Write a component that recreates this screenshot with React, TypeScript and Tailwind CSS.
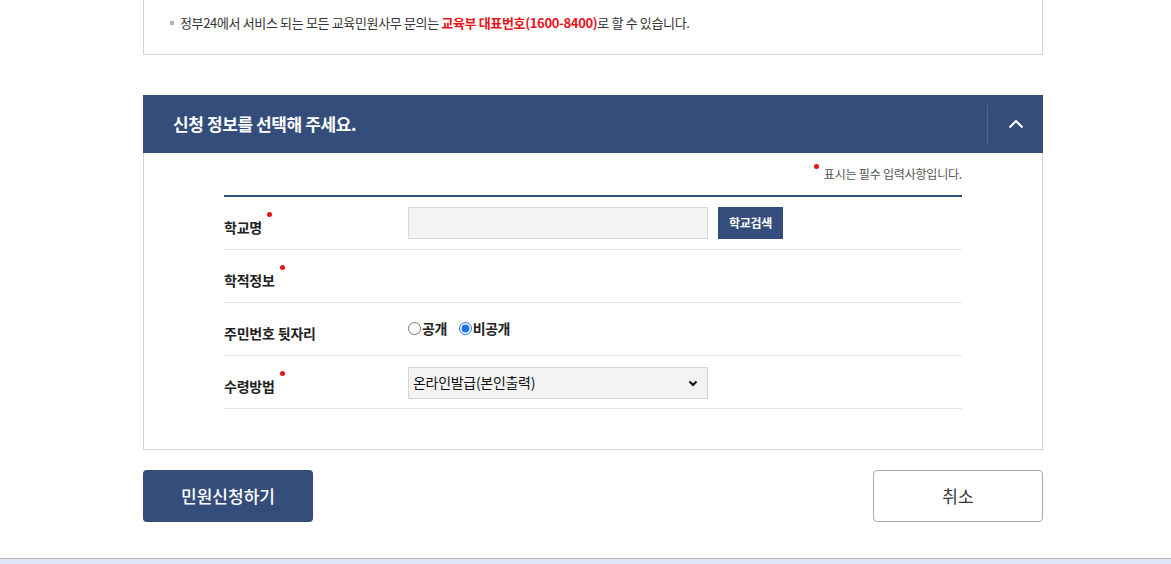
import React from "react";

const F = { fontFamily: '"Noto Sans CJK KR", "Noto Sans", sans-serif' };

function Dot({ className = "" }: { className?: string }) {
  return <span className={`absolute h-[5px] w-[5px] rounded-full bg-[#e8131b] ${className}`} />;
}

function Label({ text, req }: { text: string; req?: boolean }) {
  return (
    <div className="w-[184px] shrink-0 pt-[6px]">
      <span className="relative inline-block text-[14px] font-bold tracking-[-0.2px] text-[#222]">
        {text}
        {req && <Dot className="-right-[10px] -top-[5px]" />}
      </span>
    </div>
  );
}

export default function App() {
  return (
    <div style={F} className="flex h-[564px] w-[1171px] flex-col bg-white text-[#333]">
      <div className="ml-[143px] flex h-[55px] w-[900px] shrink-0 items-center border-x border-b border-[#d5d5d5] pb-[8px] pl-[26px]">
        <span className="mr-[6px] h-[4px] w-[4px] bg-[#b5b5b5]" />
        <span className="text-[13px] tracking-[-0.35px] text-[#333]">
          정부24에서 서비스 되는 모든 교육민원사무 문의는{" "}
          <b className="text-[#e8131b]">교육부 대표번호(1600-8400)</b>로 할 수 있습니다.
        </span>
      </div>

      <div className="ml-[143px] mt-[40px] w-[900px] shrink-0">
        <div className="flex h-[58px] items-center bg-[#344d7a]">
          <h2 className="flex-1 pl-[30px] text-[17px] font-bold tracking-[-0.4px] text-white">신청 정보를 선택해 주세요.</h2>
          <div className="h-[39px] w-px bg-[#4d6591]" />
          <div className="flex w-[55px] items-center justify-center">
            <svg width="16" height="10" viewBox="0 0 16 10" fill="none">
              <path d="M1.5 8.5 L8 2 L14.5 8.5" stroke="white" strokeWidth="2" />
            </svg>
          </div>
        </div>
        <div className="border-x border-b border-[#d5d5d5] px-[80px] pb-[40px]">
          <div className="flex h-[42px] items-center justify-end">
            <span className="relative text-[12px] tracking-[-0.2px] text-[#555]">
              <Dot className="-left-[10px] -top-[1px]" />
              표시는 필수 입력사항입니다.
            </span>
          </div>
          <div className="border-t-2 border-[#344d7a]">
            <div className="flex h-[53px] items-center border-b border-[#e6e6e6]">
              <Label text="학교명" req />
              <input className="h-[32px] w-[300px] border border-[#dadada] bg-[#f4f4f4]" />
              <button className="ml-[10px] h-[32px] w-[65px] bg-[#344d7a] text-[12px] font-bold tracking-[-0.3px] text-white">학교검색</button>
            </div>
            <div className="flex h-[53px] items-center border-b border-[#e6e6e6]">
              <Label text="학적정보" req />
            </div>
            <div className="flex h-[53px] items-center border-b border-[#e6e6e6]">
              <Label text="주민번호 뒷자리" />
              <div className="flex items-center text-[14px] font-bold tracking-[-0.5px] text-[#222] -mt-[2px]">
                <label className="flex items-center">
                  <input type="radio" name="r" className="m-0 h-[13px] w-[13px]" />
                  <span className="ml-[1px]">공개</span>
                </label>
                <label className="ml-[12px] flex items-center">
                  <input type="radio" name="r" defaultChecked className="m-0 h-[13px] w-[13px] accent-[#1a73e8]" />
                  <span className="ml-[1px]">비공개</span>
                </label>
              </div>
            </div>
            <div className="flex h-[53px] items-center border-b border-[#e6e6e6]">
              <Label text="수령방법" req />
              <div className="relative mt-[1px] flex h-[32px] w-[300px] items-center border border-[#d5d5d5] bg-[#f3f3f3] pl-[4px] text-[14px] tracking-[-0.3px] text-[#111]">
                온라인발급(본인출력)
                <svg className="absolute right-[9px] top-[12px]" width="10" height="7" viewBox="0 0 10 7" fill="none">
                  <path d="M1.5 1.5 L5 5 L8.5 1.5" stroke="#111" strokeWidth="2.2" />
                </svg>
              </div>
            </div>
          </div>
        </div>
        <div className="mt-[20px] flex justify-between">
          <button className="h-[52px] w-[170px] rounded-[4px] bg-[#344d7a] text-[17px] font-medium text-white">민원신청하기</button>
          <button className="h-[52px] w-[170px] rounded-[4px] border border-[#a9a9a9] bg-white text-[17px] text-[#333]">취소</button>
        </div>
      </div>
      <div className="mt-auto h-[6px] border-t border-[#b9b9b9] bg-[#dce6f7]" />
    </div>
  );
}
